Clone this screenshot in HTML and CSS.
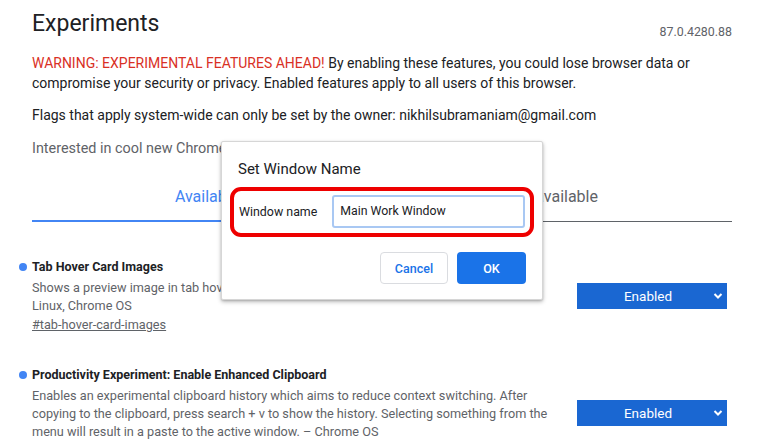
FILE: index.html
```html
<!DOCTYPE html>
<html>
<head>
<meta charset="utf-8">
<link rel="stylesheet" href="styles.css">
</head>
<body>
<div class="page">
  <header class="head">
    <h1 class="title">Experiments</h1>
    <span class="version">87.0.4280.88</span>
  </header>
  <p class="warning"><span class="red">WARNING: EXPERIMENTAL FEATURES AHEAD!</span> By enabling these features, you could lose browser data or compromise your security or privacy. Enabled features apply to all users of this browser.</p>
  <p class="owner">Flags that apply system-wide can only be set by the owner: nikhilsubramaniam@gmail.com</p>
  <p class="interested">Interested in cool new Chrome features? Try our <a class="beta">beta channel</a>.</p>
  <div class="tabs">
    <div class="tab active">Available</div>
    <div class="tab">Unavailable</div>
  </div>
  <div class="list">
    <div class="exp">
      <div class="info">
        <h3 class="name">Tab Hover Card Images</h3>
        <p class="desc">Shows a preview image in tab hover cards, if tab hover cards are enabled. – Mac, Windows, Linux, Chrome OS</p>
        <a class="perma">#tab-hover-card-images</a>
      </div>
      <div class="sel">Enabled<svg class="chev" width="10" height="8" viewBox="0 0 10 8"><path d="M1.5 2 L5 5.5 L8.5 2" fill="none" stroke="#fff" stroke-width="2"/></svg></div>
    </div>
    <div class="exp">
      <div class="info info-clipped">
        <h3 class="name">Productivity Experiment: Enable Enhanced Clipboard</h3>
        <p class="desc">Enables an experimental clipboard history which aims to reduce context switching. After copying to the clipboard, press search + v to show the history. Selecting something from the menu will result in a paste to the active window. – Chrome OS</p>
      </div>
      <div class="sel">Enabled<svg class="chev" width="10" height="8" viewBox="0 0 10 8"><path d="M1.5 2 L5 5.5 L8.5 2" fill="none" stroke="#fff" stroke-width="2"/></svg></div>
    </div>
  </div>
</div>

<div class="dialog">
  <div class="dlg-title">Set Window Name</div>
  <div class="field">
    <span class="label">Window name</span>
    <div class="input">Main Work Window</div>
  </div>
  <div class="buttons">
    <div class="btn cancel">Cancel</div>
    <div class="btn ok">OK</div>
  </div>
</div>
</body>
</html>
```

FILE: styles.css
```css
html, body {
  margin: 0;
  padding: 0;
  background: #fff;
}
body {
  font-family: Roboto, "Liberation Sans", sans-serif;
  color: #202124;
  width: 763px;
  height: 447px;
  overflow: hidden;
  position: relative;
}
.page {
  width: 700px;
  margin-left: 32px;
}
.head {
  display: flex;
  justify-content: space-between;
  align-items: flex-end;
  padding-top: 8px;
}
.title {
  margin: 0;
  font-size: 23px;
  line-height: 32px;
  font-weight: 400;
}
.version {
  font-size: 12.4px;
  line-height: 16px;
  color: #5f6368;
}
.warning, .owner {
  font-size: 14px;
  line-height: 20px;
  margin: 0;
}
.interested {
  font-size: 14.4px;
  line-height: 20px;
  margin: 14px 0 0;
  color: #5f6368;
}
.warning { margin-top: 13px; }
.owner { margin-top: 12px; }
.red { color: #d93025; }
.beta { color: #1a73e8; }
.tabs {
  display: flex;
  margin-top: 28px;
  border-bottom: 1px solid #5f6368;
}
.tab {
  flex: 1;
  text-align: center;
  font-size: 16px;
  line-height: 20px;
  padding-bottom: 13px;
  border-bottom: 2px solid transparent;
  margin-bottom: -1px;
  color: #5f6368;
}
.tab.active {
  color: #4285f4;
  border-bottom-color: #4285f4;
}
.list {
  margin-top: 35.5px;
  display: flex;
  flex-direction: column;
  gap: 32px;
}
.exp {
  display: flex;
  align-items: center;
  gap: 20px;
}
.info {
  flex: 1;
  position: relative;
}
.info-clipped {
  padding-bottom: 19px;
}
.name {
  margin: 0;
  font-size: 12.5px;
  line-height: 18px;
  font-weight: 700;
  color: #202124;
  position: relative;
}
.name::before {
  content: "";
  position: absolute;
  left: -13px;
  top: 5.5px;
  width: 8px;
  height: 8px;
  border-radius: 50%;
  background: #4285f4;
}
.desc {
  margin: 3px 0 0;
  font-size: 12.7px;
  line-height: 18px;
  color: #5f6368;
}
.perma {
  display: block;
  margin-top: 1px;
  font-size: 12.7px;
  line-height: 18px;
  color: #5f6368;
  text-decoration: underline;
}
.sel {
  width: 150px;
  height: 26px;
  margin-right: 5px;
  flex: none;
  background: #1a67d2;
  color: #fff;
  font-size: 13.5px;
  display: flex;
  align-items: center;
  justify-content: center;
  position: relative;
  box-sizing: border-box;
  padding-right: 8px;
}
.chev {
  position: absolute;
  right: 4px;
  top: 9px;
}
.dialog {
  position: absolute;
  left: 221px;
  top: 141px;
  width: 322px;
  height: 159px;
  box-sizing: border-box;
  background: #fff;
  border: 1px solid #d6d6d6;
  border-radius: 2px;
  box-shadow: 0 2px 4px rgba(0,0,0,0.25), 0 1px 2px rgba(0,0,0,0.15);
  padding: 17px 16px 0 16px;
}
.dlg-title {
  font-size: 15px;
  line-height: 20px;
  color: #202124;
}
.field {
  margin: 8px -8px 0 -8px;
  border: 4px solid #ee0000;
  border-radius: 11px;
  padding: 4px 5px 5px 5px;
  display: flex;
  align-items: center;
}
.label {
  width: 94px;
  font-size: 12.4px;
  color: #202124;
}
.input {
  width: 194px;
  height: 33px;
  box-sizing: border-box;
  border: 2px solid #a9c8f3;
  border-radius: 3px;
  padding-left: 6px;
  font-size: 12.3px;
  line-height: 29px;
  color: #202124;
}
.buttons {
  display: flex;
  justify-content: flex-end;
  gap: 9px;
  margin-top: 15px;
}
.btn {
  height: 32px;
  box-sizing: border-box;
  border-radius: 4px;
  font-size: 12.5px;
  font-weight: 500;
  display: flex;
  align-items: center;
  justify-content: center;
}
.cancel {
  width: 68px;
  border: 1px solid #dadce0;
  color: #1a73e8;
}
.ok {
  width: 69px;
  background: #1a73e8;
  color: #fff;
}
```
